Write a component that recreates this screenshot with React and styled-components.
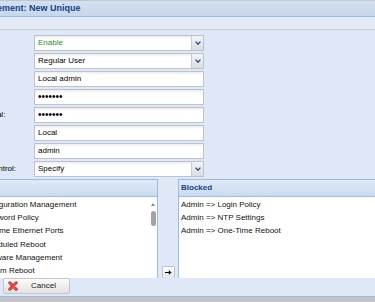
import styled, { createGlobalStyle } from "styled-components";

const GlobalStyle = createGlobalStyle`
  html, body {
    margin: 0;
    padding: 0;
  }
  body {
    background: #c4c4c4;
    font-family: "Liberation Sans", Arial, sans-serif;
    font-size: 8px;
    color: #000;
  }
`;

const Viewport = styled.div`
  width: 375px;
  height: 302px;
  overflow: hidden;
  background: #c4c4c4;
`;

// the window is wider than the screenshot and starts left of it
const Window = styled.div`
  width: 480px;
  margin-left: -50px;
  background: #dfe8f6;
  border-top: 1px solid #b9c7d9;
  border-bottom: 1px solid #99bbe8;
`;

const TitleBar = styled.div`
  height: 15px;
  line-height: 15px;
  text-indent: -4px;
  background: linear-gradient(#d4e0ef, #c7d6ea);
  border-bottom: 1px solid #99bbe8;
  color: #15428b;
  font-weight: bold;
  font-size: 9px;
  white-space: nowrap;
`;

const Strip = styled.div`
  height: 12px;
  background: #e2eaf6;
  border-bottom: 1px solid #c2cfe1;
`;

const Form = styled.div`
  display: flex;
  flex-direction: column;
  gap: 2px;
  padding-top: 5px;
`;

const Row = styled.div`
  display: grid;
  grid-template-columns: 74px 170px;
  padding-left: 10px;
  height: 16px;
`;

const Label = styled.div`
  line-height: 16px;
  white-space: nowrap;
`;

const Field = styled.div`
  display: flex;
  height: 14px;
  border: 1px solid #bcc3cf;
  background: linear-gradient(#ececec, #fff 3px);
`;

const Value = styled.div`
  flex: 1;
  padding-left: 3px;
  line-height: 14px;
  color: ${(p) => p.$color || "#000"};
  font-size: ${(p) => (p.$secret ? "10px" : "8px")};
`;

const Trigger = styled.div`
  width: 11px;
  border-left: 1px solid #c6ccd6;
  background: linear-gradient(#f4f4f4, #dadde2);
  display: flex;
  align-items: center;
  justify-content: center;
`;

const Lists = styled.div`
  display: grid;
  grid-template-columns: 203px 20px 1fr;
  padding: 0 5px;
  margin-top: 2px;
`;

const Panel = styled.div`
  display: flex;
  flex-direction: column;
  border: 1px solid #99bbe8;
  border-bottom: none;
  background: #fff;
`;

const PanelHeader = styled.div`
  height: 16px;
  line-height: 16px;
  padding-left: 2px;
  background: linear-gradient(#e0eaf7, #c9daf1);
  border-bottom: 1px solid #99bbe8;
  color: #15428b;
  font-weight: bold;
`;

const PanelBody = styled.div`
  display: flex;
  height: 81px;
  overflow: hidden;
`;

const Items = styled.div`
  flex: 1;
  padding-top: 0.5px;
  white-space: nowrap;
  overflow: hidden;
`;

const Item = styled.div`
  height: 13.4px;
  line-height: 13.4px;
  padding-left: ${(p) => (p.$indent ? 24 : 2)}px;
  color: #111;
`;

const Scrollbar = styled.div`
  width: 8px;
  display: flex;
  flex-direction: column;
  align-items: center;
  padding-top: 6px;
  gap: 5px;
`;

const UpArrow = styled.div`
  width: 0;
  height: 0;
  border-left: 2.5px solid transparent;
  border-right: 2.5px solid transparent;
  border-bottom: 3px solid #8a8a8a;
`;

const Thumb = styled.div`
  width: 5px;
  height: 15px;
  border-radius: 3px;
  background: #a3a3a3;
`;

const Gap = styled.div`
  display: flex;
  flex-direction: column;
  justify-content: flex-end;
  align-items: center;
`;

const SmallButton = styled.div`
  width: 11px;
  height: 11px;
  border: 1px solid #c3c3c3;
  border-bottom: none;
  border-radius: 1px;
  background: linear-gradient(#fdfdfd, #e6e6e6);
  display: flex;
  align-items: center;
  justify-content: center;
`;

const Footer = styled.div`
  display: flex;
  gap: 4px;
  height: 18px;
  padding-left: 5px;
  background: #dfe8f6;
`;

const Button = styled.div`
  width: ${(p) => p.$width}px;
  height: 14px;
  display: flex;
  align-items: center;
  padding-left: 4px;
  border: 1px solid #c5c5c5;
  border-radius: 2px;
  background: linear-gradient(#fbfbfb, #e2e2e2);
  color: #222;
`;

const ButtonText = styled.span`
  flex: 1;
  text-align: center;
  line-height: 14px;
`;

const Chevron = () => (
  <svg width="6" height="4" viewBox="0 0 6 4">
    <path d="M0.6 0.6 L3 3.2 L5.4 0.6" fill="none" stroke="#2c4f8e" strokeWidth="1.4" />
  </svg>
);

const RightArrow = () => (
  <svg width="7" height="5" viewBox="0 0 7 5">
    <path d="M0 2.5 H4.5" stroke="#000" strokeWidth="1" />
    <path d="M3.8 0.3 L6.6 2.5 L3.8 4.7 Z" fill="#000" />
  </svg>
);

const CancelIcon = () => (
  <svg width="10" height="10" viewBox="0 0 10 10">
    <path d="M1.8 1.8 L8.2 8.2 M8.2 1.8 L1.8 8.2" stroke="#c41d1d" strokeWidth="3" strokeLinecap="round" />
    <path d="M1.8 1.8 L8.2 8.2 M8.2 1.8 L1.8 8.2" stroke="#f05454" strokeWidth="1.6" strokeLinecap="round" />
  </svg>
);

const rows = [
  { label: "Status:", value: "Enable", color: "#2e8f2e", combo: true },
  { label: "Privilege:", value: "Regular User", combo: true },
  { label: "Comment:", value: "Local admin" },
  { label: "Password:", value: "•••••••", secret: true },
  { label: "Verify Portal:", value: "•••••••", secret: true },
  { label: "Auth Type:", value: "Local" },
  { label: "Group:", value: "admin" },
  { label: "Access Control:", value: "Specify", combo: true },
];

const available = [
  "Configuration Management",
  "Password Policy",
  "Rename Ethernet Ports",
  "Scheduled Reboot",
  "Firmware Management",
  "System Reboot",
];

const blocked = [
  "Admin => Login Policy",
  "Admin => NTP Settings",
  "Admin => One-Time Reboot",
];

export default function App() {
  return (
    <Viewport>
      <GlobalStyle />
      <Window>
        <TitleBar>User Management: New Unique</TitleBar>
        <Strip />
        <Form>
          {rows.map((r) => (
            <Row key={r.label}>
              <Label>{r.label}</Label>
              <Field>
                <Value $color={r.color} $secret={r.secret}>
                  {r.value}
                </Value>
                {r.combo && (
                  <Trigger>
                    <Chevron />
                  </Trigger>
                )}
              </Field>
            </Row>
          ))}
        </Form>
        <Lists>
          <Panel>
            <PanelHeader>Available</PanelHeader>
            <PanelBody>
              <Items>
                {available.map((a) => (
                  <Item key={a} $indent>
                    {a}
                  </Item>
                ))}
              </Items>
              <Scrollbar>
                <UpArrow />
                <Thumb />
              </Scrollbar>
            </PanelBody>
          </Panel>
          <Gap>
            <SmallButton>
              <RightArrow />
            </SmallButton>
          </Gap>
          <Panel>
            <PanelHeader>Blocked</PanelHeader>
            <PanelBody>
              <Items>
                {blocked.map((b) => (
                  <Item key={b}>{b}</Item>
                ))}
              </Items>
            </PanelBody>
          </Panel>
        </Lists>
        <Footer>
          <Button $width={38}>
            <ButtonText>Save</ButtonText>
          </Button>
          <Button $width={61}>
            <CancelIcon />
            <ButtonText>Cancel</ButtonText>
          </Button>
        </Footer>
      </Window>
    </Viewport>
  );
}
